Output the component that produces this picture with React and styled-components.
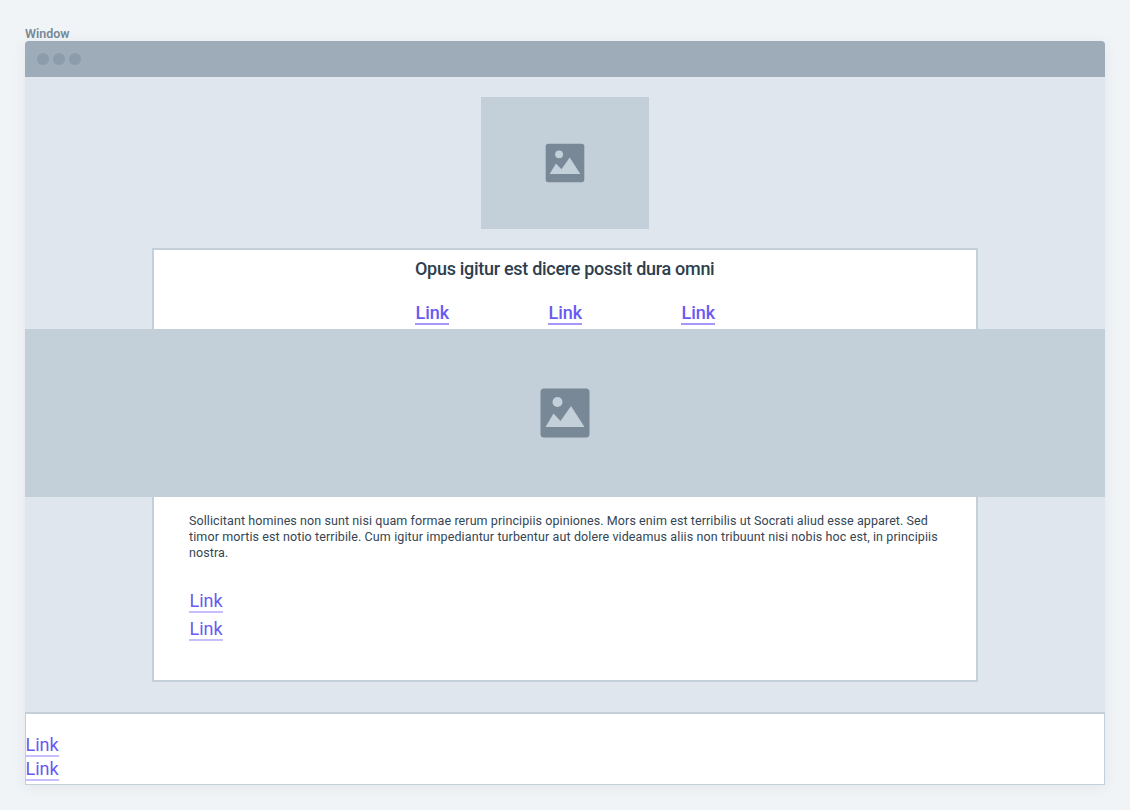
import React from "react";
import styled, { createGlobalStyle } from "styled-components";

const GlobalStyle = createGlobalStyle`
  * { box-sizing: border-box; }
  body {
    margin: 0;
    background: #f0f4f7;
    font-family: Roboto, "Liberation Sans", sans-serif;
    color: #2d3e4d;
  }
`;

const Page = styled.div`
  width: 1130px;
  height: 810px;
  padding: 26px 25px 25px;
  overflow: hidden;
`;

const WindowLabel = styled.div`
  height: 15px;
  font-size: 12.5px;
  line-height: 15px;
  font-weight: 600;
  color: #788896;
`;

const Window = styled.div`
  display: flex;
  flex-direction: column;
  height: 744px;
  border-radius: 4px 4px 0 0;
  background: #dfe6ee;
  box-shadow: 0 2px 14px rgba(50, 60, 70, 0.07);
`;

const TitleBar = styled.div`
  display: flex;
  align-items: center;
  gap: 4px;
  flex: none;
  height: 36px;
  padding-left: 12px;
  border-radius: 4px 4px 0 0;
  background: #9eacb9;
`;

const Dot = styled.span`
  width: 12px;
  height: 12px;
  border-radius: 50%;
  background: #8c9caa;
`;

const Content = styled.div`
  display: flex;
  flex-direction: column;
  align-items: center;
  flex: 1;
  padding-top: 20px;
`;

const Placeholder = styled.div`
  display: flex;
  align-items: center;
  justify-content: center;
  flex: none;
  background: #c3cfd9;
`;

const Logo = styled(Placeholder)`
  width: 168px;
  height: 132px;
`;

const Hero = styled(Placeholder)`
  height: 168px;
  margin: 0 -129px;
`;

const Card = styled.main`
  display: flex;
  flex-direction: column;
  width: 826px;
  height: 434px;
  margin-top: 19px;
  border: 2px solid #c3cfd9;
  background: #fff;
`;

const CardHeader = styled.header`
  display: flex;
  flex-direction: column;
  align-items: center;
  height: 79px;
  padding-top: 8px;
`;

const Title = styled.h1`
  width: 300px;
  margin: 0;
  font-size: 18px;
  line-height: 22px;
  font-weight: 500;
  letter-spacing: -0.29px;
  white-space: nowrap;
`;

const Nav = styled.nav`
  display: flex;
  justify-content: space-between;
  width: 300px;
  margin-top: 22px;
`;

const Link = styled.a`
  display: block;
  width: 34px;
  height: 23px;
  padding-left: 0.5px;
  border-bottom: 2px solid ${(p) => (p.$strong ? "#a497f7" : "#c7bffb")};
  color: #6a5af2;
  font-size: 18px;
  line-height: 22px;
  font-weight: ${(p) => (p.$strong ? 500 : 400)};
  white-space: nowrap;
`;

const Article = styled.section`
  padding: 16px 0 0 35px;
`;

const Paragraph = styled.p`
  margin: 0;
  color: #344554;
  font-size: 12.5px;
  line-height: 16px;
  white-space: nowrap;
`;

const Line = styled.span`
  display: block;
  letter-spacing: ${(p) => p.$tracking}px;
`;

const LinkList = styled.div`
  display: flex;
  flex-direction: column;
  gap: ${(p) => p.$gap}px;
  margin-top: ${(p) => p.$top}px;
`;

const Footer = styled.footer`
  flex: none;
  height: 73px;
  border: 1px solid #c3cfd9;
  border-top-width: 2px;
  background: #fff;
`;

const FooterLinks = styled(LinkList)`
  margin-left: -1px;
`;

const ImageIcon = ({ size, viewBox = "0 0 50 50" }) => (
  <svg width={size} height={size} viewBox={viewBox} aria-hidden="true">
    <rect x="0.5" y="0.5" width="49" height="49" rx="3.5" fill="#788896" />
    <circle cx="17.5" cy="14" r="5" fill="#c3cfd9" />
    <path d="M5.5 39 13.5 25.5 20.5 33 31 18 44.5 39Z" fill="#c3cfd9" />
  </svg>
);

export default function App() {
  return (
    <>
      <GlobalStyle />
      <Page>
        <WindowLabel>Window</WindowLabel>
        <Window>
          <TitleBar>
            <Dot />
            <Dot />
            <Dot />
          </TitleBar>
          <Content>
            <Logo>
              <ImageIcon size={40} viewBox="-0.4 -0.4 50.8 50.8" />
            </Logo>
            <Card>
              <CardHeader>
                <Title>Opus igitur est dicere possit dura omni</Title>
                <Nav>
                  <Link $strong>Link</Link>
                  <Link $strong>Link</Link>
                  <Link $strong>Link</Link>
                </Nav>
              </CardHeader>
              <Hero>
                <ImageIcon size={50} />
              </Hero>
              <Article>
                <Paragraph>
                  <Line $tracking={0.087}>
                    Sollicitant homines non sunt nisi quam formae rerum principiis opiniones. Mors enim est terribilis ut Socrati aliud esse apparet. Sed
                  </Line>
                  <Line $tracking={0.11}>
                    timor mortis est notio terribile. Cum igitur impediantur turbentur aut dolere videamus aliis non tribuunt nisi nobis hoc est, in principiis
                  </Line>
                  <Line $tracking={0.1}>nostra.</Line>
                </Paragraph>
                <LinkList $top={29} $gap={5}>
                  <Link>Link</Link>
                  <Link>Link</Link>
                </LinkList>
              </Article>
            </Card>
          </Content>
          <Footer>
            <FooterLinks $top={20} $gap={1}>
              <Link>Link</Link>
              <Link>Link</Link>
            </FooterLinks>
          </Footer>
        </Window>
      </Page>
    </>
  );
}
